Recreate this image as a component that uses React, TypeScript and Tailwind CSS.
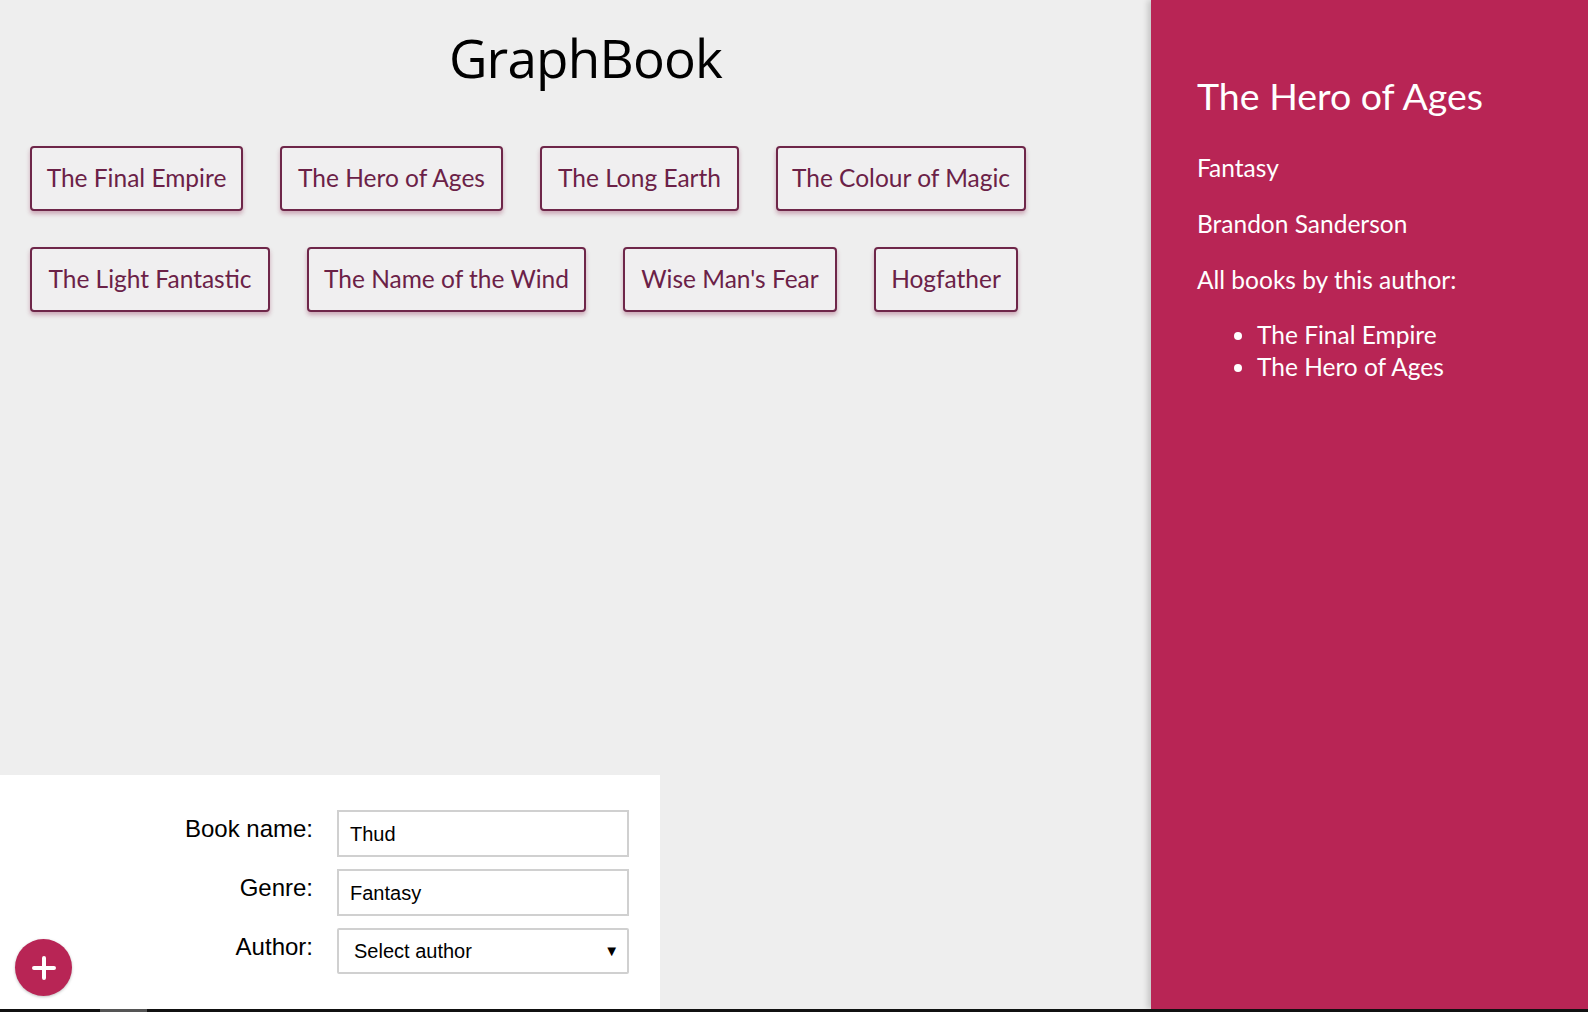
import React from "react";

const books = [
  { t: "The Final Empire", w: "w-[213px]" },
  { t: "The Hero of Ages", w: "w-[223px]" },
  { t: "The Long Earth", w: "w-[199px]" },
  { t: "The Colour of Magic", w: "w-[250px]" },
  { t: "The Light Fantastic", w: "w-[240px]" },
  { t: "The Name of the Wind", w: "w-[279px]" },
  { t: "Wise Man's Fear", w: "w-[214px]" },
  { t: "Hogfather", w: "w-[144px]" },
];

export default function App() {
  return (
    <div className="w-[1588px] h-[1012px] overflow-hidden flex flex-col bg-[#eeeeee]">
      <div className="flex flex-1 min-h-0">
        {/* Left column */}
        <div className="w-[1151px] flex flex-col bg-[#eeeeee]">
          <div className="h-[118px] flex items-center justify-center pl-[20px] pb-[4px]">
            <h1 className="text-[53px] leading-none text-black font-['Open_Sans',sans-serif] tracking-[-0.8px]">
              GraphBook
            </h1>
          </div>
          <div className="flex flex-wrap gap-x-[37px] gap-y-[36px] px-[30px] pt-[28px]">
            {books.map((b) => (
              <div
                key={b.t}
                className={`${b.w} h-[65px] flex items-center justify-center rounded-[4px] border-2 border-[#6e2649] bg-[#f0eff0] text-[#6b2147] text-[24.5px] font-['Lato',sans-serif] shadow-[0_3px_4px_rgba(140,40,80,0.35)]`}
              >
                {b.t}
              </div>
            ))}
          </div>
          <div className="flex-1" />
          {/* Form */}
          <div className="relative w-[660px] h-[234px] bg-white pt-[35px] font-['Liberation_Sans',Arial,sans-serif]">
            <div className="flex flex-col gap-[12px]">
              <div className="flex items-start">
                <label className="w-[313px] text-right text-[24px] leading-[28px] text-black mt-[5px]">Book name:</label>
                <div className="ml-[24px] w-[292px] h-[47px] border-2 border-[#d0d0d0] flex items-center pl-[11px] text-[20px] text-black">
                  Thud
                </div>
              </div>
              <div className="flex items-start">
                <label className="w-[313px] text-right text-[24px] leading-[28px] text-black mt-[5px]">Genre:</label>
                <div className="ml-[24px] w-[292px] h-[47px] border-2 border-[#d0d0d0] flex items-center pl-[11px] text-[20px] text-black">
                  Fantasy
                </div>
              </div>
              <div className="flex items-start">
                <label className="w-[313px] text-right text-[24px] leading-[28px] text-black mt-[5px]">Author:</label>
                <div className="ml-[24px] w-[292px] h-[46px] border-2 border-[#d0d0d0] rounded-[2px] flex items-center justify-between pl-[15px] pr-[8px] text-[20px] text-black">
                  <span>Select author</span>
                  <span className="text-[15px]">▼</span>
                </div>
              </div>
            </div>
            <div className="absolute left-[15px] top-[164px] w-[57px] h-[57px] rounded-full bg-[#b82555] flex items-center justify-center shadow-[0_1px_3px_rgba(0,0,0,0.25)]">
              <svg width="24" height="24" viewBox="0 0 24 24">
                <path d="M12 2v20M2 12h20" stroke="white" strokeWidth="4" strokeLinecap="round" />
              </svg>
            </div>
          </div>
        </div>
        {/* Right panel */}
        <div className="flex-1 bg-[#b82555] text-white pl-[46px] pt-[73px] font-['Lato',sans-serif] shadow-[-3px_0_6px_rgba(0,0,0,0.18)]">
          <h2 className="text-[37.5px] leading-[46px]">The Hero of Ages</h2>
          <p className="text-[24.5px] mt-[34px] leading-[30px]">Fantasy</p>
          <p className="text-[24.5px] mt-[26px] leading-[30px]">Brandon Sanderson</p>
          <p className="text-[24.5px] mt-[26px] leading-[30px]">All books by this author:</p>
          <ul className="list-disc pl-[60px] mt-[24px] text-[24.5px] leading-[32px]">
            <li>The Final Empire</li>
            <li>The Hero of Ages</li>
          </ul>
        </div>
      </div>
      <div className="h-[3px] bg-[#111111] flex">
        <div className="ml-[100px] w-[47px] bg-[#555555]" />
      </div>
    </div>
  );
}
